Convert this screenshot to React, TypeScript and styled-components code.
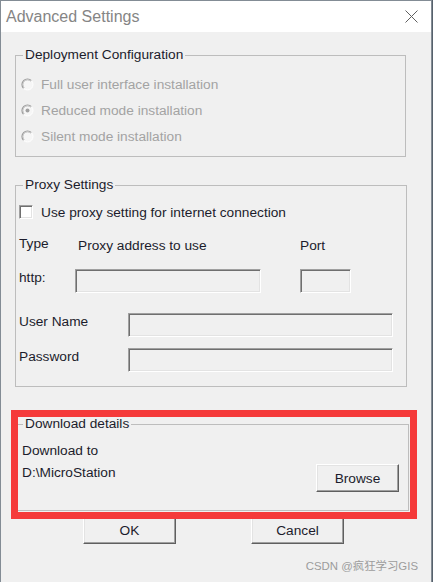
import styled, { createGlobalStyle } from "styled-components";

const GlobalStyle = createGlobalStyle`
  html, body {
    margin: 0;
    padding: 0;
    background: #56616c;
  }
  body {
    font-family: "Liberation Sans", Arial, sans-serif;
  }
`;

const textColor = "#1c1c2c";
const disabledColor = "#a3a3a3";
const face = "#f0f0f0";

const Window = styled.div`
  width: 432px;
  height: 582px;
  box-sizing: border-box;
  border: 1px solid #838c95;
  border-bottom: none;
  display: flex;
  flex-direction: column;
  background: ${face};
`;

const TitleBar = styled.div`
  height: 31px;
  flex: none;
  background: #ffffff;
  display: flex;
  align-items: center;
  justify-content: space-between;
  padding: 0 13px 0 5px;
`;

const Title = styled.span`
  font-size: 16px;
  color: #858585;
  line-height: 20px;
`;

const Body = styled.div`
  flex: 1;
  display: flex;
  flex-direction: column;
  padding: 0 13px 0 14px;
  font-size: 13.7px;
  color: ${textColor};
`;

const Group = styled.fieldset<{ $w: number; $mt?: number }>`
  margin: ${(p) => p.$mt ?? 0}px 0 0 0;
  padding: 0;
  width: ${(p) => p.$w}px;
  box-sizing: border-box;
  min-inline-size: 0;
  border: 1px solid #bdbdbd;
`;

const Legend = styled.legend`
  margin-left: 7px;
  padding: 0 2px;
  font-size: 13.7px;
  line-height: 16px;
  color: ${textColor};
`;

const RadioList = styled.div`
  padding: 8px 0 7px 5px;
  display: flex;
  flex-direction: column;
`;

const RadioRow = styled.label`
  height: 26px;
  display: flex;
  align-items: center;
  gap: 7px;
  color: ${disabledColor};
`;

const ProxyBody = styled.div`
  padding: 9px 0 14px 3px;
  display: flex;
  flex-direction: column;
`;

const CheckRow = styled.label`
  height: 20px;
  display: flex;
  align-items: center;
  gap: 8px;
`;

const CheckBox = styled.span`
  width: 14px;
  height: 14px;
  box-sizing: border-box;
  background: #ffffff;
  border: 1px solid;
  border-color: #a0a0a0 #ffffff #ffffff #a0a0a0;
  box-shadow: inset 1px 1px #6f6f6f, inset -1px -1px #e3e3e3;
`;

const AddressGrid = styled.div<{ $mt: number }>`
  display: grid;
  grid-template-columns: 56px 186px 39px 51px;
  align-items: start;
  margin-top: ${(p) => p.$mt}px;
`;

const HeadLabel = styled.span<{ $pt?: number; $pl?: number }>`
  line-height: 20px;
  padding-top: ${(p) => p.$pt ?? 0}px;
  padding-left: ${(p) => p.$pl ?? 0}px;
  white-space: nowrap;
`;

const CredGrid = styled.div<{ $mt: number }>`
  display: grid;
  grid-template-columns: 109px 265px;
  align-items: start;
  margin-top: ${(p) => p.$mt}px;
`;

const FieldLabel = styled.span`
  line-height: 18px;
  white-space: nowrap;
`;

const Input = styled.input`
  height: 24px;
  box-sizing: border-box;
  margin: 0;
  padding: 0 3px;
  background: ${face};
  border: 1px solid;
  border-color: #a0a0a0 #ffffff #ffffff #a0a0a0;
  box-shadow: inset 1px 1px #6f6f6f, inset -1px -1px #e3e3e3;
  outline: none;
`;

const Highlight = styled.div`
  position: relative;
  margin-top: 29px;
`;

const RedFrame = styled.div`
  position: absolute;
  top: -6px;
  left: -4px;
  width: 406px;
  height: 109px;
  box-sizing: border-box;
  border: 7px solid #f53a3a;
  pointer-events: none;
`;

const DownloadBody = styled.div`
  padding: 9px 9px 18px 6px;
  display: flex;
  flex-direction: column;
  gap: 2px;
`;

const Line = styled.span`
  line-height: 20px;
`;

const PathRow = styled.div`
  display: flex;
  justify-content: space-between;
  align-items: flex-start;
`;

const Button = styled.button<{ $w: number }>`
  width: ${(p) => p.$w}px;
  height: 28px;
  margin: 0;
  padding: 0;
  font-family: "Liberation Sans", Arial, sans-serif;
  font-size: 13.7px;
  color: ${textColor};
  background: ${face};
  border: 1px solid;
  border-color: #ffffff #5f5f5f #5f5f5f #ffffff;
  box-shadow: inset -1px -1px #a0a0a0, inset 1px 1px #e3e3e3;
`;

const BrowseButton = styled(Button)`
  margin-top: 1px;
`;

const ButtonRow = styled.div`
  display: flex;
  gap: 75px;
  padding-left: 68px;
  margin-top: 5px;
`;

const Watermark = styled.div`
  margin-top: 14px;
  text-align: right;
  line-height: 16px;
  font-size: 11.4px;
  color: #9c9c9c;
  font-family: "Liberation Sans", "Noto Sans CJK SC", sans-serif;
`;

const CloseIcon = () => (
  <svg width="13" height="13" viewBox="0 0 13 13">
    <path d="M0.5 0.5 L12.5 12.5 M12.5 0.5 L0.5 12.5" stroke="#5f5f5f" strokeWidth="1" fill="none" />
  </svg>
);

const Radio = ({ checked }: { checked?: boolean }) => (
  <svg width="13" height="13" viewBox="0 0 13 13">
    <circle cx="6.5" cy="6.5" r="5.5" fill="#f6f6f6" stroke="none" />
    <path d="M10.4 2.6 A5.5 5.5 0 0 0 2.6 10.4" stroke="#9a9a9a" strokeWidth="1.2" fill="none" />
    <path d="M9.7 3.3 A4.5 4.5 0 0 0 3.3 9.7" stroke="#c4c4c4" strokeWidth="1" fill="none" />
    <path d="M10.4 2.6 A5.5 5.5 0 0 1 2.6 10.4" stroke="#ffffff" strokeWidth="1" fill="none" />
    {checked && <circle cx="6.5" cy="6.5" r="2" fill="#a0a0a0" />}
  </svg>
);

export default function App() {
  return (
    <>
      <GlobalStyle />
      <Window>
        <TitleBar>
          <Title>Advanced Settings</Title>
          <CloseIcon />
        </TitleBar>
        <Body>
          <Group $w={391} $mt={15}>
            <Legend>Deployment Configuration</Legend>
            <RadioList>
              <RadioRow>
                <Radio />
                Full user interface installation
              </RadioRow>
              <RadioRow>
                <Radio checked />
                Reduced mode installation
              </RadioRow>
              <RadioRow>
                <Radio />
                Silent mode installation
              </RadioRow>
            </RadioList>
          </Group>

          <Group $w={392} $mt={20}>
            <Legend>Proxy Settings</Legend>
            <ProxyBody>
              <CheckRow>
                <CheckBox />
                Use proxy setting for internet connection
              </CheckRow>
              <AddressGrid $mt={12}>
                <HeadLabel>Type</HeadLabel>
                <HeadLabel $pt={2} $pl={3}>Proxy address to use</HeadLabel>
                <span />
                <HeadLabel $pt={2}>Port</HeadLabel>
              </AddressGrid>
              <AddressGrid $mt={13}>
                <FieldLabel>http:</FieldLabel>
                <Input disabled />
                <span />
                <Input disabled />
              </AddressGrid>
              <CredGrid $mt={20}>
                <FieldLabel>User Name</FieldLabel>
                <Input disabled />
              </CredGrid>
              <CredGrid $mt={11}>
                <FieldLabel>Password</FieldLabel>
                <Input disabled />
              </CredGrid>
            </ProxyBody>
          </Group>

          <Highlight>
            <Group $w={394}>
              <Legend>Download details</Legend>
              <DownloadBody>
                <Line>Download to</Line>
                <PathRow>
                  <Line>D:\MicroStation</Line>
                  <BrowseButton $w={83}>Browse</BrowseButton>
                </PathRow>
              </DownloadBody>
            </Group>
            <RedFrame />
          </Highlight>

          <ButtonRow>
            <Button $w={93}>OK</Button>
            <Button $w={93}>Cancel</Button>
          </ButtonRow>

          <Watermark>CSDN @疯狂学习GIS</Watermark>
        </Body>
      </Window>
    </>
  );
}
